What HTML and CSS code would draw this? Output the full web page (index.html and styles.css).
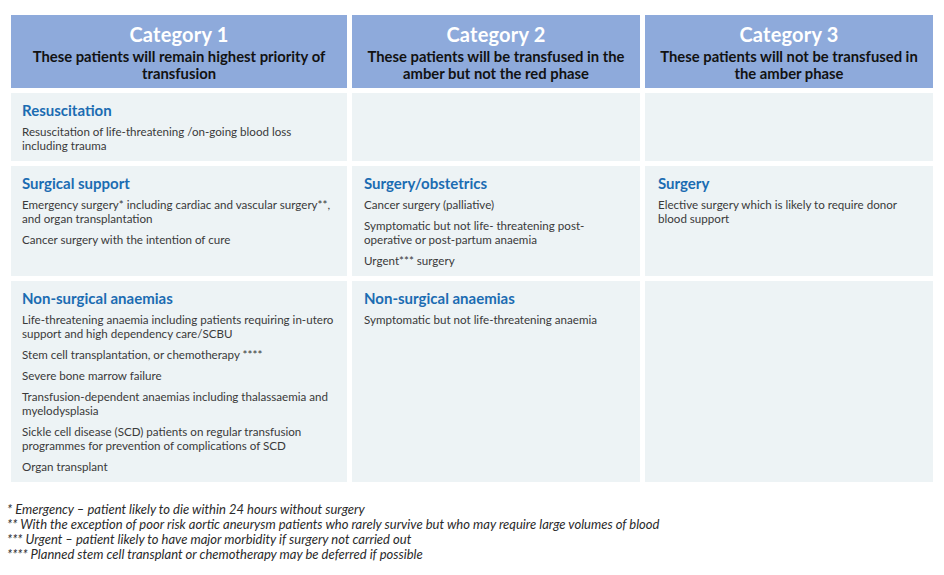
FILE: index.html
```html
<!DOCTYPE html>
<html lang="en">
<head>
<meta charset="utf-8">
<title>Transfusion categories</title>
<link rel="stylesheet" href="styles.css">
</head>
<body>
<div class="page">
  <div class="grid">
    <div class="head">
      <div class="cat">Category 1</div>
      <div class="sub">These patients will remain highest priority of transfusion</div>
    </div>
    <div class="head">
      <div class="cat">Category 2</div>
      <div class="sub">These patients will be transfused in the amber but not the red phase</div>
    </div>
    <div class="head">
      <div class="cat">Category 3</div>
      <div class="sub">These patients will not be transfused in the amber phase</div>
    </div>

    <div class="cell c1">
      <h3>Resuscitation</h3>
      <p>Resuscitation of life-threatening /on-going blood loss including trauma</p>
    </div>
    <div class="cell c2"></div>
    <div class="cell c3"></div>

    <div class="cell c1">
      <h3>Surgical support</h3>
      <p>Emergency surgery* including cardiac and vascular surgery**, and organ transplantation</p>
      <p>Cancer surgery with the intention of cure</p>
    </div>
    <div class="cell c2">
      <h3>Surgery/obstetrics</h3>
      <p>Cancer surgery (palliative)</p>
      <p>Symptomatic but not life- threatening post-operative or post-partum anaemia</p>
      <p>Urgent*** surgery</p>
    </div>
    <div class="cell c3">
      <h3>Surgery</h3>
      <p>Elective surgery which is likely to require donor blood support</p>
    </div>

    <div class="cell c1">
      <h3>Non-surgical anaemias</h3>
      <p>Life-threatening anaemia including patients requiring in-utero support and high dependency care/SCBU</p>
      <p>Stem cell transplantation, or chemotherapy ****</p>
      <p>Severe bone marrow failure</p>
      <p>Transfusion-dependent anaemias including thalassaemia and myelodysplasia</p>
      <p>Sickle cell disease (SCD) patients on regular transfusion programmes for prevention of complications of SCD</p>
      <p>Organ transplant</p>
    </div>
    <div class="cell c2">
      <h3>Non-surgical anaemias</h3>
      <p>Symptomatic but not life-threatening anaemia</p>
    </div>
    <div class="cell c3"></div>
  </div>

  <div class="notes">
    <p>* Emergency – patient likely to die within 24 hours without surgery</p>
    <p>** With the exception of poor risk aortic aneurysm patients who rarely survive but who may require large volumes of blood</p>
    <p>*** Urgent – patient likely to have major morbidity if surgery not carried out</p>
    <p>**** Planned stem cell transplant or chemotherapy may be deferred if possible</p>
  </div>
</div>
</body>
</html>
```

FILE: styles.css
```css
html, body {
  margin: 0;
  padding: 0;
  background: #ffffff;
}

body {
  font-family: "Lato", "Open Sans", "Liberation Sans", sans-serif;
  color: #3a3a3a;
}

.page {
  padding: 15px 0 0 11px;
}

.grid {
  display: grid;
  grid-template-columns: 336px 288px 288px;
  column-gap: 5px;
  row-gap: 5px;
  width: 922px;
}

.head {
  background: #8eaadb;
  text-align: center;
  padding: 8px 5px 6px;
}

.cat {
  font-size: 20px;
  font-weight: 700;
  line-height: 22px;
  color: #ffffff;
  letter-spacing: 0.2px;
}

.sub {
  font-size: 14.8px;
  font-weight: 700;
  line-height: 17px;
  color: #121212;
  margin-top: 3px;
}

.cell {
  background: #edf3f5;
  padding: 8px 10px 8px 11px;
}

.cell.c2 {
  padding: 8px 12px 8px 12px;
}

.cell.c3 {
  padding: 8px 14px 8px 13px;
}

.cell h3 {
  margin: 0 0 6px;
  font-size: 15px;
  line-height: 18px;
  font-weight: 700;
  color: #1b6cb2;
}

.cell p {
  margin: 0 0 7px;
  font-size: 11.6px;
  line-height: 14px;
  color: #3a3a3a;
}

.cell p:last-child {
  margin-bottom: 0;
}

.notes {
  margin-top: 20px;
  margin-left: -4px;
}

.notes p {
  margin: 0;
  font-size: 13px;
  line-height: 15px;
  font-style: italic;
  color: #2a2a2a;
}
```
